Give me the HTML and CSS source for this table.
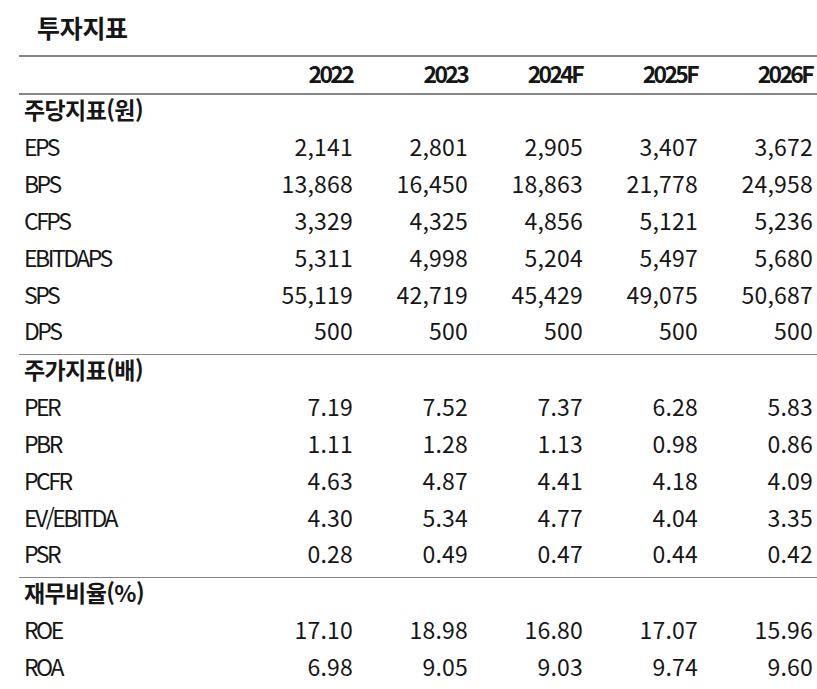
FILE: index.html
```html
<!DOCTYPE html>
<html lang="ko">
<head>
<meta charset="utf-8">
<link rel="stylesheet" href="styles.css">
</head>
<body>
<div class="page">
  <h1 class="title">투자지표</h1>
  <div class="fin">
    <div class="row head">
      <span class="label"></span><span class="num">2022</span><span class="num">2023</span><span class="num">2024F</span><span class="num">2025F</span><span class="num">2026F</span>
    </div>
    <section class="group">
      <div class="sec">주당지표(원)</div>
      <div class="row"><span class="label">EPS</span><span class="num">2,141</span><span class="num">2,801</span><span class="num">2,905</span><span class="num">3,407</span><span class="num">3,672</span></div>
      <div class="row"><span class="label">BPS</span><span class="num">13,868</span><span class="num">16,450</span><span class="num">18,863</span><span class="num">21,778</span><span class="num">24,958</span></div>
      <div class="row"><span class="label">CFPS</span><span class="num">3,329</span><span class="num">4,325</span><span class="num">4,856</span><span class="num">5,121</span><span class="num">5,236</span></div>
      <div class="row"><span class="label">EBITDAPS</span><span class="num">5,311</span><span class="num">4,998</span><span class="num">5,204</span><span class="num">5,497</span><span class="num">5,680</span></div>
      <div class="row"><span class="label">SPS</span><span class="num">55,119</span><span class="num">42,719</span><span class="num">45,429</span><span class="num">49,075</span><span class="num">50,687</span></div>
      <div class="row"><span class="label">DPS</span><span class="num">500</span><span class="num">500</span><span class="num">500</span><span class="num">500</span><span class="num">500</span></div>
    </section>
    <section class="group">
      <div class="sec">주가지표(배)</div>
      <div class="row"><span class="label">PER</span><span class="num">7.19</span><span class="num">7.52</span><span class="num">7.37</span><span class="num">6.28</span><span class="num">5.83</span></div>
      <div class="row"><span class="label">PBR</span><span class="num">1.11</span><span class="num">1.28</span><span class="num">1.13</span><span class="num">0.98</span><span class="num">0.86</span></div>
      <div class="row"><span class="label">PCFR</span><span class="num">4.63</span><span class="num">4.87</span><span class="num">4.41</span><span class="num">4.18</span><span class="num">4.09</span></div>
      <div class="row"><span class="label">EV/EBITDA</span><span class="num">4.30</span><span class="num">5.34</span><span class="num">4.77</span><span class="num">4.04</span><span class="num">3.35</span></div>
      <div class="row"><span class="label">PSR</span><span class="num">0.28</span><span class="num">0.49</span><span class="num">0.47</span><span class="num">0.44</span><span class="num">0.42</span></div>
    </section>
    <section class="group">
      <div class="sec">재무비율(%)</div>
      <div class="row"><span class="label">ROE</span><span class="num">17.10</span><span class="num">18.98</span><span class="num">16.80</span><span class="num">17.07</span><span class="num">15.96</span></div>
      <div class="row"><span class="label">ROA</span><span class="num">6.98</span><span class="num">9.05</span><span class="num">9.03</span><span class="num">9.74</span><span class="num">9.60</span></div>
    </section>
  </div>
</div>
</body>
</html>
```
FILE: styles.css
```css
html, body {
  margin: 0;
  padding: 0;
  background: #fff;
}
body {
  font-family: "Noto Sans CJK KR", "Noto Sans", sans-serif;
  color: #161616;
  overflow: hidden;
}
.page {
  padding-left: 19px;
  width: 798px;
}
.title {
  margin: 0;
  padding-left: 18px;
  height: 55px;
  font-size: 25px;
  font-weight: 700;
  line-height: 54px;
  letter-spacing: -0.3px;
}
.fin {
  width: 798px;
  font-size: 23px;
  line-height: 1;
  border-top: 2px solid #858585;
}
.row {
  display: grid;
  grid-template-columns: 223px repeat(5, 115px);
  align-items: center;
  height: 36.8px;
  box-sizing: border-box;
  padding-bottom: 3px;
}
.label {
  padding-left: 5px;
  letter-spacing: -2.5px;
}
.num {
  text-align: right;
  padding-right: 4px;
  letter-spacing: 0.2px;
}
.row.head {
  height: 38px;
  padding-bottom: 4px;
  border-bottom: 2px solid #858585;
  font-weight: 700;
}
.row.head .num {
  letter-spacing: -2.7px;
  padding-right: 5px;
}
.group {
  padding-bottom: 3px;
}
.group + .group {
  border-top: 1px solid #858585;
}
.sec {
  height: 35px;
  box-sizing: border-box;
  padding: 0 0 6px 5px;
  display: flex;
  align-items: center;
  font-weight: 700;
  letter-spacing: -0.6px;
}
```
